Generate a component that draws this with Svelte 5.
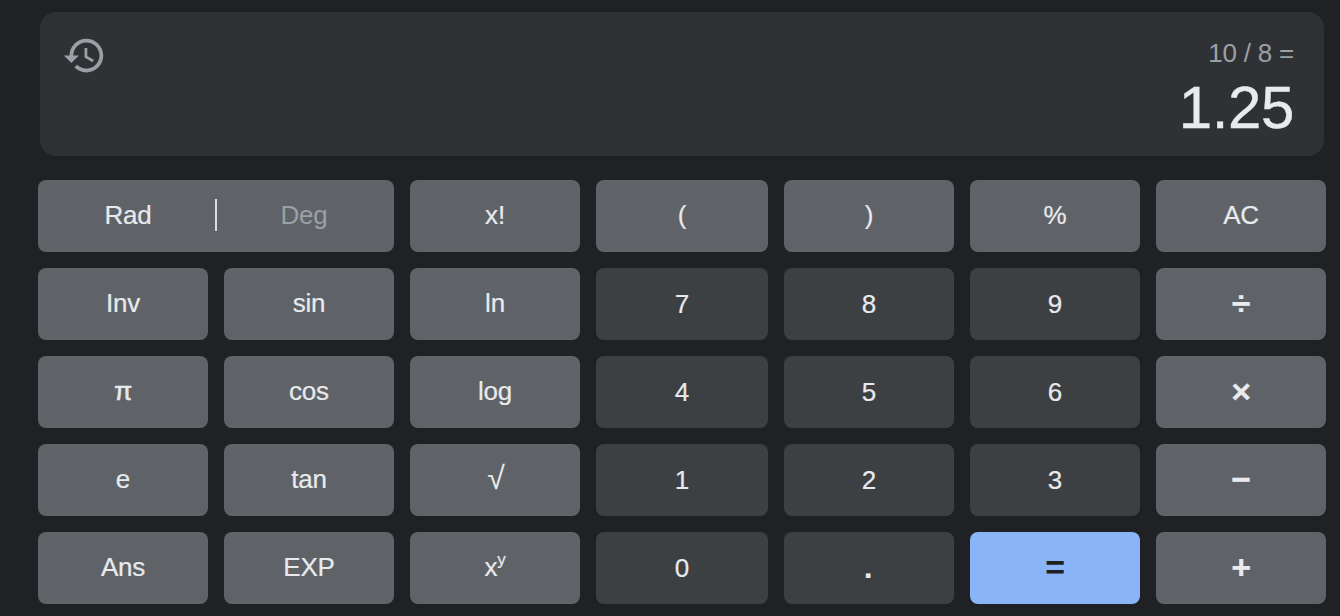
<script lang="ts">
  // kind: fn = light grey, num = dark grey, op = light grey with big symbol, eq = blue
  interface Key {
    label: string
    kind: 'fn' | 'num' | 'eq' | 'op' | 'root' | 'pi' | 'dot'
    sup?: string
  }

  const keys: Key[] = [
    { label: 'x!', kind: 'fn' },
    { label: '(', kind: 'fn' },
    { label: ')', kind: 'fn' },
    { label: '%', kind: 'fn' },
    { label: 'AC', kind: 'fn' },
    { label: 'Inv', kind: 'fn' },
    { label: 'sin', kind: 'fn' },
    { label: 'ln', kind: 'fn' },
    { label: '7', kind: 'num' },
    { label: '8', kind: 'num' },
    { label: '9', kind: 'num' },
    { label: '÷', kind: 'op' },
    { label: 'π', kind: 'pi' },
    { label: 'cos', kind: 'fn' },
    { label: 'log', kind: 'fn' },
    { label: '4', kind: 'num' },
    { label: '5', kind: 'num' },
    { label: '6', kind: 'num' },
    { label: '×', kind: 'op' },
    { label: 'e', kind: 'fn' },
    { label: 'tan', kind: 'fn' },
    { label: '√', kind: 'root' },
    { label: '1', kind: 'num' },
    { label: '2', kind: 'num' },
    { label: '3', kind: 'num' },
    { label: '−', kind: 'op' },
    { label: 'Ans', kind: 'fn' },
    { label: 'EXP', kind: 'fn' },
    { label: 'x', kind: 'fn', sup: 'y' },
    { label: '0', kind: 'num' },
    { label: '.', kind: 'dot' },
    { label: '=', kind: 'eq' },
    { label: '+', kind: 'op' }
  ]
</script>

<div class="calc">
  <div class="screen">
    <svg class="history" viewBox="0 0 24 24" aria-label="History">
      <path d="M13 3c-4.97 0-9 4.03-9 9H1l3.89 3.89.07.14L9 12H6c0-3.87 3.13-7 7-7s7 3.13 7 7-3.13 7-7 7c-1.93 0-3.68-.79-4.94-2.06l-1.42 1.42C8.27 19.99 10.51 21 13 21c4.97 0 9-4.03 9-9s-4.03-9-9-9zm-1 5v5l4.28 2.54.72-1.21-3.5-2.08V8H12z" />
    </svg>
    <div class="readout">
      <div class="expr">10 / 8 =</div>
      <div class="result">1.25</div>
    </div>
  </div>

  <div class="keys">
    <div class="key fn angle">
      <span class="on">Rad</span>
      <span class="sep"></span>
      <span class="off">Deg</span>
    </div>
    {#each keys as k}
      <button class="key {k.kind}">{k.label}{#if k.sup}<sup>{k.sup}</sup>{/if}</button>
    {/each}
  </div>
</div>

<style>
  :global(body) {
    background: #202124;
  }
  .calc {
    padding: 12px 14px 12px 38px;
    font-family: "Liberation Sans", Arial, sans-serif;
    color: #e8eaed;
  }
  .screen {
    display: flex;
    justify-content: space-between;
    height: 144px;
    box-sizing: border-box;
    margin: 0 2px;
    padding: 21px 30px 0 22px;
    background: #303134;
    border-radius: 16px;
  }
  .history {
    width: 45px;
    height: 45px;
    fill: #9aa0a6;
  }
  .readout {
    text-align: right;
  }
  .expr {
    font-size: 26px;
    line-height: 40px;
    letter-spacing: -0.2px;
    color: #9aa0a6;
  }
  .result {
    font-size: 60px;
    line-height: 70px;
    letter-spacing: -0.4px;
    -webkit-text-stroke: 0.4px #e8eaed;
  }
  .keys {
    display: grid;
    grid-template-columns: repeat(3, 170px) 172px repeat(3, 170px);
    grid-auto-rows: 72px;
    gap: 16px;
    margin-top: 24px;
  }
  .key {
    display: flex;
    align-items: center;
    justify-content: center;
    padding: 0;
    border: none;
    border-radius: 8px;
    font: inherit;
    font-size: 26px;
    letter-spacing: -0.2px;
    color: #e8eaed;
    -webkit-text-stroke: 0.2px #e8eaed;
  }
  .fn, .pi, .root {
    background: #5f6368;
    padding-bottom: 2px;
  }
  .op {
    background: #5f6368;
    font-size: 34px;
    font-weight: 700;
    padding-bottom: 2px;
  }
  .pi {
    -webkit-text-stroke: 0.6px #e8eaed;
  }
  .root {
    font-size: 32px;
    padding: 0 0 4px 2px;
    -webkit-text-stroke: 0;
  }
  .num, .dot {
    background: #3c4043;
  }
  .dot {
    font-size: 30px;
    font-weight: 700;
    padding-right: 2px;
  }
  .eq {
    background: #8ab4f8;
    color: #202124;
    font-size: 34px;
    font-weight: 700;
    padding-bottom: 2px;
    -webkit-text-stroke: 0;
  }
  .angle {
    grid-column: span 2;
  }
  .angle span:not(.sep) {
    flex: 1;
    text-align: center;
  }
  .on {
    text-indent: 3px;
  }
  .off {
    text-indent: -3px;
    color: #9aa0a6;
    -webkit-text-stroke: 0;
  }
  .sep {
    width: 2px;
    height: 32px;
    background: #dadce0;
  }
  sup {
    font-size: 17px;
    line-height: 0;
    align-self: center;
    margin-bottom: 14px;
  }
</style>
